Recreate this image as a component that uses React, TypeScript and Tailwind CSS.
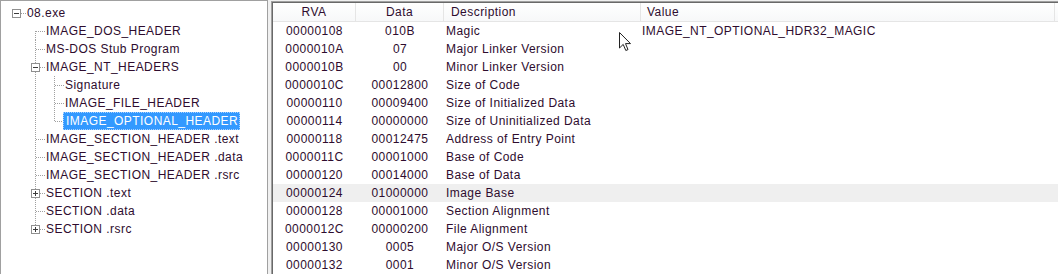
import React from "react";

type Cell = "none" | "v" | "tee" | "end" | "first" | "root";
type TreeRow = { label: string; cells: Cell[]; button?: "minus" | "plus"; selected?: boolean };

const tree: TreeRow[] = [
  { label: "08.exe", cells: ["root"], button: "minus" },
  { label: "IMAGE_DOS_HEADER", cells: ["none", "first"] },
  { label: "MS-DOS Stub Program", cells: ["none", "tee"] },
  { label: "IMAGE_NT_HEADERS", cells: ["none", "tee"], button: "minus" },
  { label: "Signature", cells: ["none", "v", "tee"] },
  { label: "IMAGE_FILE_HEADER", cells: ["none", "v", "tee"] },
  { label: "IMAGE_OPTIONAL_HEADER", cells: ["none", "v", "end"], selected: true },
  { label: "IMAGE_SECTION_HEADER .text", cells: ["none", "tee"] },
  { label: "IMAGE_SECTION_HEADER .data", cells: ["none", "tee"] },
  { label: "IMAGE_SECTION_HEADER .rsrc", cells: ["none", "tee"] },
  { label: "SECTION .text", cells: ["none", "tee"], button: "plus" },
  { label: "SECTION .data", cells: ["none", "tee"] },
  { label: "SECTION .rsrc", cells: ["none", "end"], button: "plus" },
];

const rows = [
  ["00000108", "010B", "Magic", "IMAGE_NT_OPTIONAL_HDR32_MAGIC"],
  ["0000010A", "07", "Major Linker Version", ""],
  ["0000010B", "00", "Minor Linker Version", ""],
  ["0000010C", "00012800", "Size of Code", ""],
  ["00000110", "00009400", "Size of Initialized Data", ""],
  ["00000114", "00000000", "Size of Uninitialized Data", ""],
  ["00000118", "00012475", "Address of Entry Point", ""],
  ["0000011C", "00001000", "Base of Code", ""],
  ["00000120", "00014000", "Base of Data", ""],
  ["00000124", "01000000", "Image Base", ""],
  ["00000128", "00001000", "Section Alignment", ""],
  ["0000012C", "00000200", "File Alignment", ""],
  ["00000130", "0005", "Major O/S Version", ""],
  ["00000132", "0001", "Minor O/S Version", ""],
];

const dot = { stroke: "#a0a0a0", strokeWidth: 1, strokeDasharray: "1 1", fill: "none" };

function Guide({ type, button }: { type: Cell; button?: "minus" | "plus" }) {
  return (
    <svg width="19" height="18" className="shrink-0 block">
      {(type === "v" || type === "tee" || type === "end") && (
        <line x1="9.5" y1={0} x2="9.5" y2={type === "end" ? 9 : 18} {...dot} />
      )}
      {type === "first" && <line x1="9.5" y1={9} x2="9.5" y2={18} {...dot} />}
      {type !== "none" && type !== "v" && <line x1="10" y1="9.5" x2="19" y2="9.5" {...dot} />}
      {button && (
        <g>
          <rect x="5.5" y="5.5" width="8" height="8" fill="#fff" stroke="#8f8f8f" />
          <line x1="7" y1="9.5" x2="12" y2="9.5" stroke="#3c3c3c" />
          {button === "plus" && <line x1="9.5" y1="7" x2="9.5" y2="12" stroke="#3c3c3c" />}
        </g>
      )}
    </svg>
  );
}

function Cursor() {
  return (
    <svg width="13" height="20" viewBox="0 0 13 20" className="absolute left-[619px] top-[32px]">
      <path d="M0.5 0.5 L0.5 16 L4.2 12.4 L6.8 18.5 L9 17.6 L6.5 11.6 L11.5 11.6 Z" fill="#fff" stroke="#222" strokeWidth="1" strokeLinejoin="miter" />
    </svg>
  );
}

export default function App() {
  return (
    <div
      className="relative w-[1058px] h-[274px] overflow-hidden flex bg-[#f0f0f0] text-[12px] tracking-[0.45px] text-[#2e0c2e]"
      style={{ fontFamily: '"Liberation Sans", Arial, sans-serif' }}
    >
      {/* tree pane */}
      <div className="w-[268px] h-[300px] shrink-0 bg-white border border-[#a0a0a0] pt-[3px] pl-[6px]">
        {tree.map((r) => (
          <div key={r.label} className="flex h-[18px] items-center">
            {r.cells.map((c, i) => (
              <Guide key={i} type={c} button={i === r.cells.length - 1 ? r.button : undefined} />
            ))}
            <span
              className={
                r.selected
                  ? "h-[18px] leading-[16px] pl-[2px] pr-[1px] -ml-px bg-[#3399ff] text-white border border-dotted border-[#a8d1ff] whitespace-nowrap"
                  : "h-[18px] leading-[18px] pl-[1px] whitespace-nowrap"
              }
            >
              {r.label}
            </span>
          </div>
        ))}
      </div>

      {/* list pane */}
      <div className="ml-[3px] mt-[1px] flex-1 border-l border-t border-[#a0a0a0]">
        <div className="h-full border-l border-t border-[#696969] bg-white">
          <div className="flex h-[19px] items-center bg-gradient-to-b from-white to-[#f7f8f9] border-b border-[#e5e5e5]">
            <div className="w-[83px] text-center border-r border-[#e5e5e5] leading-[18px]">RVA</div>
            <div className="w-[88px] text-center border-r border-[#e5e5e5] leading-[18px]">Data</div>
            <div className="w-[197px] pl-[7px] border-r border-[#e5e5e5] leading-[18px]">Description</div>
            <div className="w-[414px] pl-[6px] border-r border-[#e5e5e5] leading-[18px]">Value</div>
          </div>
          {rows.map((r, i) => (
            <div key={r[0]} className={"flex h-[18px] items-center " + (i === 9 ? "bg-[#efefef]" : "")}>
              <div className="w-[83px] text-center">{r[0]}</div>
              <div className="w-[88px] text-center">{r[1]}</div>
              <div className="w-[197px] pl-[2px] whitespace-nowrap">{r[2]}</div>
              <div className="pl-[1px] whitespace-nowrap">{r[3]}</div>
            </div>
          ))}
        </div>
      </div>
      <Cursor />
    </div>
  );
}
